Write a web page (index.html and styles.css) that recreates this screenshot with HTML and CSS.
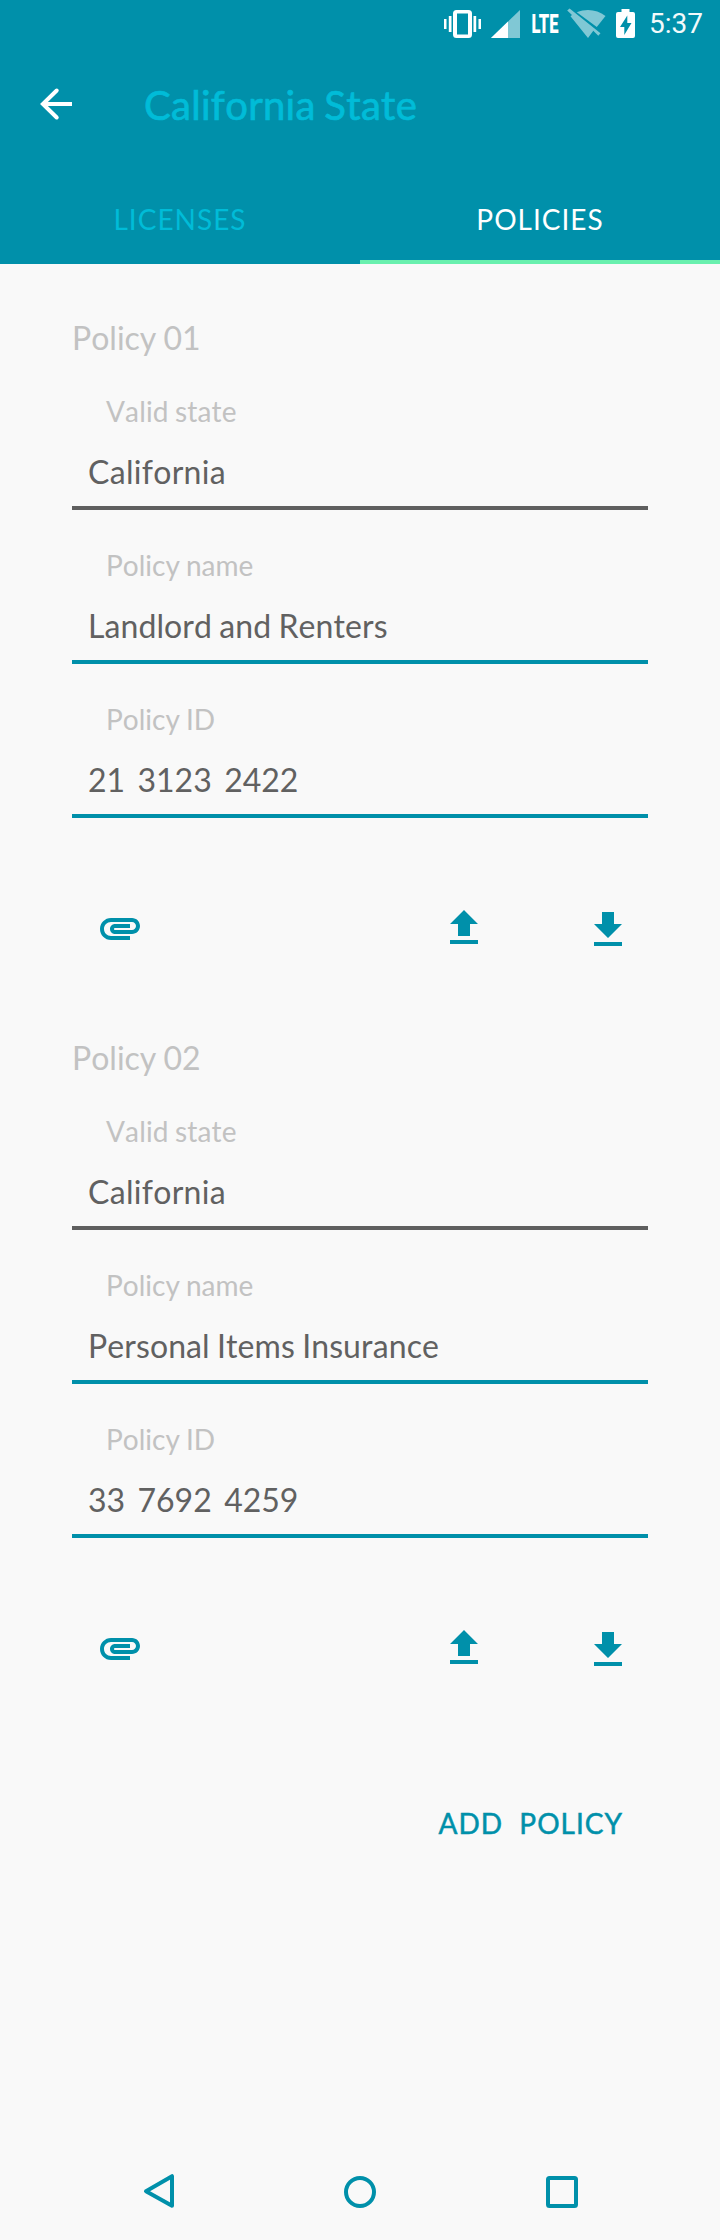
FILE: index.html
```
<!DOCTYPE html>
<html lang="en">
<head>
<meta charset="utf-8">
<title>California State</title>
<link rel="stylesheet" href="styles.css">
</head>
<body>
<svg class="defs" aria-hidden="true">
  <symbol id="attachment" viewBox="0 0 24 24"><path d="M2 12.5C2 9.46 4.46 7 7.5 7H18c2.21 0 4 1.79 4 4s-1.79 4-4 4H9.5C8.12 15 7 13.88 7 12.5S8.12 10 9.5 10H17v2H9.41c-.55 0-.55 1 0 1H18c1.1 0 2-.9 2-2s-.9-2-2-2H7.5C5.57 9 4 10.57 4 12.5S5.57 16 7.5 16H17v2H7.5C4.46 18 2 15.54 2 12.5z"/></symbol>
  <symbol id="upload" viewBox="0 0 24 24"><path d="M9 16h6v-6h4l-7-7-7 7h4zM5 18h14v2H5z"/></symbol>
  <symbol id="download" viewBox="0 0 24 24"><path d="M19 9h-4V3H9v6H5l7 7zM5 18v2h14v-2z"/></symbol>
</svg>
<div class="screen">
  <header class="header">
    <div class="status-bar">
      <svg class="status-icons" width="196" height="48" viewBox="0 0 196 48">
        <path class="solid" fill-rule="evenodd" d="M12.500 10h12a3.500 3.500 0 0 1 3.500 3.500v21a3.500 3.500 0 0 1-3.500 3.500h-12a3.500 3.500 0 0 1-3.500-3.500v-21a3.500 3.500 0 0 1 3.500-3.500zM13 13.500v21h11v-21z"/>
        <path class="solid" d="M0 19h2.500v10H0zM4.800 16h2.700v16H4.800zM29.500 16h2.700v16h-2.700zM34.500 19H37v10h-2.500z"/>
        <path class="dim" d="M76 10v28H47z"/>
        <path class="solid" d="M64 21.500V38H47z"/>
        <text class="lte" x="87.500" y="33" textLength="27" lengthAdjust="spacingAndGlyphs">LTE</text>
        <path class="dim" d="M132.800 12.200C136.500 10.700 140.500 10 144 10c6.500 0 12.500 2.200 17.500 6.100l-8.700 11z"/>
        <path class="dim" d="M123.200 10.600l2.400-2.200L156.500 33.300 154.300 35.800 149.300 30.700 144 38 126.500 16.200 128 15z"/>
        <path class="solid" fill-rule="evenodd" d="M174 12h3.500V9h8v3h3.500a2 2 0 0 1 2 2v22a2 2 0 0 1-2 2h-15a2 2 0 0 1-2-2V14a2 2 0 0 1 2-2zM183.300 15.500l-7.300 11.500h4.300v8l7.200-12h-4.200z"/>
      </svg>
      <span class="clock">5:37</span>
    </div>
    <div class="app-bar">
      <svg class="back" width="48" height="48" viewBox="0 0 48 48"><path class="shaft" d="M40 24H12"/><path d="M24.700 10.500L10.900 24 24.700 37.500"/></svg>
      <h1 class="title">California State</h1>
    </div>
    <nav class="tabs">
      <a class="tab">LICENSES</a>
      <a class="tab active">POLICIES</a>
    </nav>
  </header>
  <main class="content">
    <section class="policy">
      <h2 class="policy-title">Policy 01</h2>
      <div class="field locked"><span class="label">Valid state</span><span class="value">California</span></div>
      <div class="field"><span class="label">Policy name</span><span class="value">Landlord and Renters</span></div>
      <div class="field"><span class="label">Policy ID</span><span class="value number">21  3123  2422</span></div>
      <div class="actions">
        <svg class="icon"><use href="#attachment"/></svg>
        <svg class="icon upload"><use href="#upload"/></svg>
        <svg class="icon download"><use href="#download"/></svg>
      </div>
    </section>
    <section class="policy">
      <h2 class="policy-title">Policy 02</h2>
      <div class="field locked"><span class="label">Valid state</span><span class="value">California</span></div>
      <div class="field"><span class="label">Policy name</span><span class="value">Personal Items Insurance</span></div>
      <div class="field"><span class="label">Policy ID</span><span class="value number">33  7692  4259</span></div>
      <div class="actions">
        <svg class="icon"><use href="#attachment"/></svg>
        <svg class="icon upload"><use href="#upload"/></svg>
        <svg class="icon download"><use href="#download"/></svg>
      </div>
    </section>
    <div class="add-row"><a class="add">ADD  POLICY</a></div>
  </main>
  <footer class="nav-bar">
    <svg width="48" height="48" viewBox="0 0 48 48"><path d="M10 23.200L36 8.200V37.800z"/></svg>
    <svg width="48" height="48" viewBox="0 0 48 48"><circle cx="24" cy="24" r="14"/></svg>
    <svg width="48" height="48" viewBox="0 0 48 48"><rect x="10" y="10" width="28" height="28" rx="1.500"/></svg>
  </footer>
</div>
</body>
</html>
```
FILE: styles.css
```
* { box-sizing: border-box; }
body { margin: 0; background: #f9f9f9; font-family: Lato, "Liberation Sans", sans-serif; font-kerning: none; font-variant-ligatures: none; }
h1, h2 { margin: 0; font-weight: 400; }
svg { display: block; flex: none; }
.defs { display: none; }
.screen { width: 720px; height: 2240px; display: flex; flex-direction: column; }

.header { height: 264px; flex: none; background: #0090aa; }
.status-bar { height: 48px; display: flex; justify-content: flex-end; padding-right: 17px; }
.status-icons { margin-right: 9px; }
.solid { fill: #fff; }
.dim { fill: #80c8d5; }
.lte { fill: #fff; font: 900 25px Roboto, sans-serif; }
.clock { width: 54px; color: #f2fafb; font: 400 28px/48px Roboto, sans-serif; white-space: nowrap; }
.app-bar { height: 112px; display: flex; align-items: flex-start; padding: 32px 0 0 32px; }
.back { fill: none; stroke: #fff; stroke-width: 4; stroke-linecap: round; }
.shaft { stroke-linecap: butt; }
.title { padding-top: 1px; margin-left: 64px; color: #00bcd8; font-size: 40px; line-height: 48px; -webkit-text-stroke: .7px #00bcd8; white-space: nowrap; letter-spacing: .3px; word-spacing: -2px; }
.tabs { height: 104px; display: flex; }
.tab { flex: 1; padding-top: 42px; text-align: center; color: #00bcd8; font-size: 28px; line-height: 34px; letter-spacing: 1px; }
.tab.active { color: #fff; border-bottom: 4px solid #69f0ae; }

.content { flex: 1; padding: 54px 72px 0; }
.policy { height: 720px; }
.policy-title { height: 38px; color: #c2c2c2; font-size: 32px; line-height: 40px; word-spacing: -1px; }
.field { height: 154px; display: flex; flex-direction: column; padding: 38px 0 0 16px; border-bottom: 4px solid #0090aa; white-space: pre; word-spacing: -1px; }
.field.locked { border-color: #5f5f5f; letter-spacing: .3px; }
.field.locked .label { letter-spacing: .15px; }
.label { padding-left: 18px; margin-bottom: 24px; color: #c2c2c2; font-size: 28px; line-height: 34px; }
.value { color: #616161; font-size: 32px; line-height: 40px; }
.field:not(.locked) .value { letter-spacing: .08px; }
.field .value.number { letter-spacing: 0; word-spacing: -2px; }
.actions { display: flex; padding: 86px 16px 0 24px; }
.icon { width: 48px; height: 48px; fill: #0090aa; }
.upload { margin-left: auto; }
.download { margin: 2px 0 0 96px; }
.add-row { display: flex; justify-content: flex-end; padding: 48px 25px 0 0; }
.add { color: #0090aa; font-size: 28px; line-height: 34px; -webkit-text-stroke: .5px #0090aa; letter-spacing: 1px; white-space: pre; }

.nav-bar { height: 72px; display: grid; grid-template-columns: 200px 202px 48px; padding-left: 136px; }
.nav-bar svg { fill: none; stroke: #0090aa; stroke-width: 4; stroke-linejoin: round; }
```
